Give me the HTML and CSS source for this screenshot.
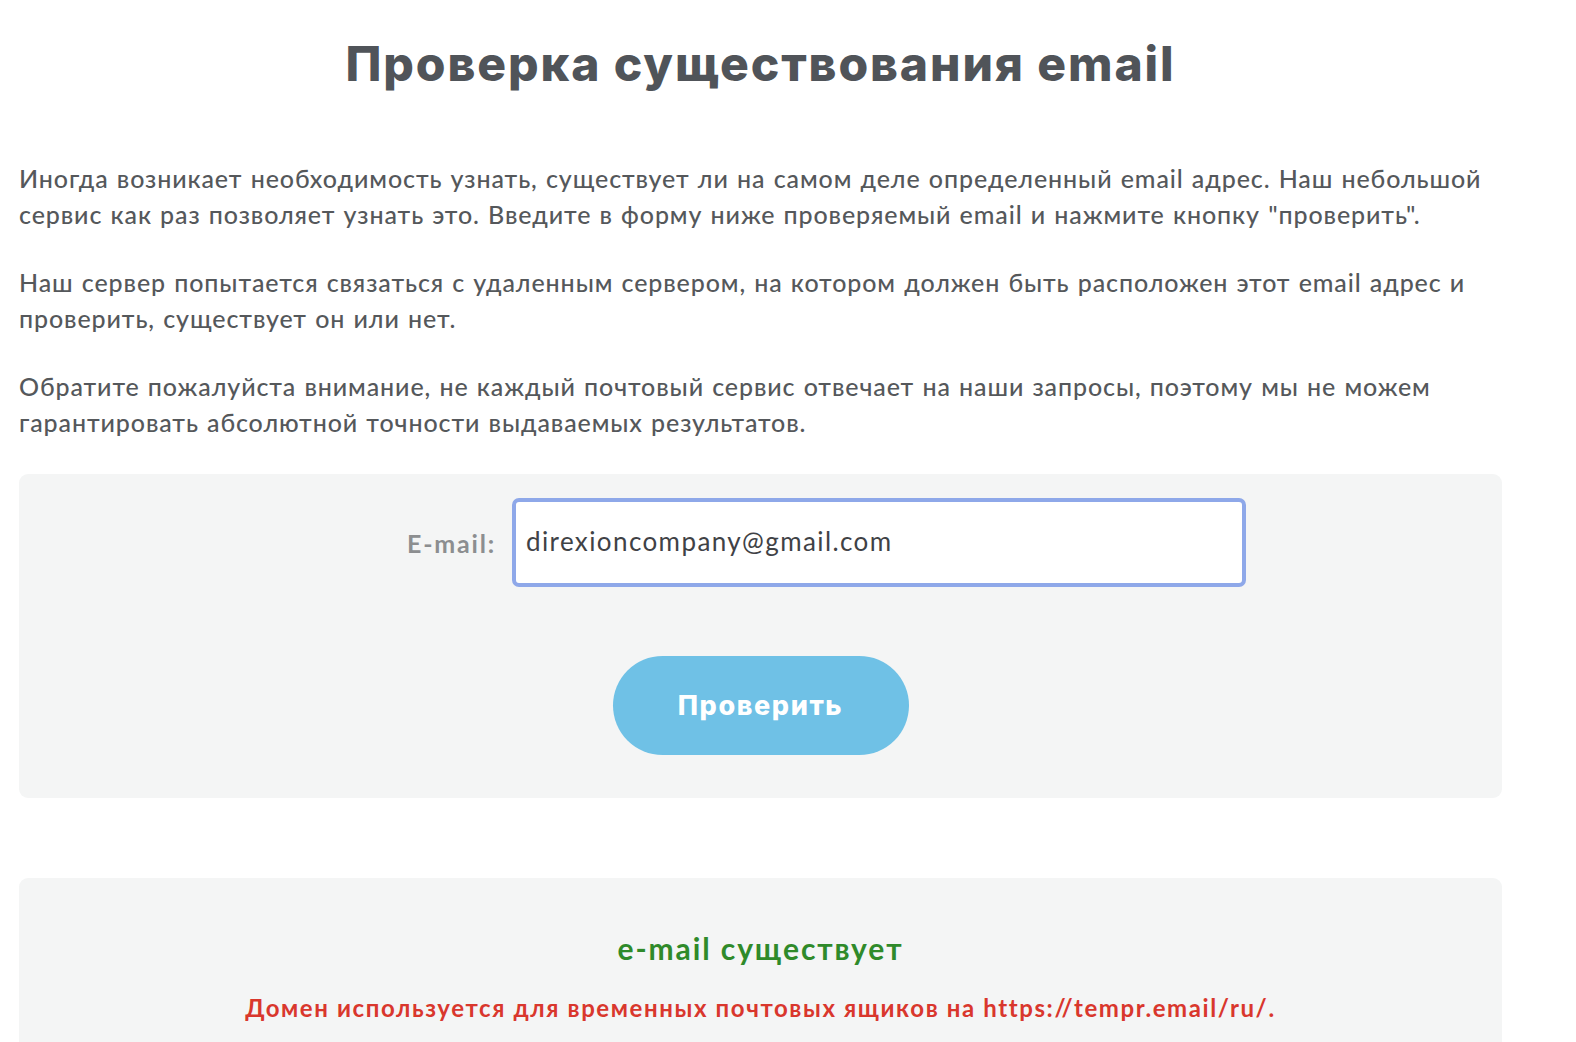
FILE: index.html
```html
<!DOCTYPE html>
<html lang="ru">
  <head>
    <meta charset="UTF-8" />
    <meta name="viewport" content="width=device-width, initial-scale=1.0" />
    <title>Проверка существования email</title>
    <link rel="stylesheet" href="styles.css">
  </head>
  <body>
    <div class="container">
      <h1>Проверка существования email</h1>

      <p>
        Иногда возникает необходимость узнать, существует ли на самом деле определенный email адрес. Наш небольшой<br />
        сервис как раз позволяет узнать это. Введите в форму ниже проверяемый email и нажмите кнопку "проверить".
      </p>
      <p>
        Наш сервер попытается связаться с удаленным сервером, на котором должен быть расположен этот email адрес и<br />
        проверить, существует он или нет.
      </p>
      <p>
        Обратите пожалуйста внимание, не каждый почтовый сервис отвечает на наши запросы, поэтому мы не можем<br />
        гарантировать абсолютной точности выдаваемых результатов.
      </p>

      <form id="checkForm" class="panel check-form">
        <div class="field">
          <label for="email">E-mail:</label>
          <input type="text" id="email" value="direxioncompany@gmail.com" />
        </div>
        <button type="submit">Проверить</button>
      </form>

      <div class="panel result">
        <div class="result-ok">e-mail существует</div>
        <div class="result-warn">Домен используется для временных почтовых ящиков на https://tempr.email/ru/.</div>
      </div>
    </div>
  </body>
</html>
```

FILE: styles.css
```css
body {
  font-family: Lato, "Open Sans", sans-serif;
  background-color: #fff;
  color: #55585b;
  margin: 0;
  padding: 0;
}

.container {
  width: 1483px;
  margin-left: 19px;
}

h1 {
  font-family: Inter, "Open Sans", sans-serif;
  font-weight: 800;
  font-size: 48px;
  letter-spacing: 1.9px;
  color: #505459;
  text-align: center;
  margin: 35px 0 67px;
  line-height: 58px;
}

p {
  font-size: 25px;
  line-height: 36px;
  font-weight: 500;
  letter-spacing: 0.9px;
  word-spacing: 1px;
  margin: 0 0 32px;
  white-space: nowrap;
}

.panel {
  background-color: #f4f5f5;
  border-radius: 9px;
}

.check-form {
  margin-top: 34px;
  padding: 24px 0 43px;
  display: flex;
  flex-direction: column;
  align-items: center;
  gap: 69px;
}

.field {
  display: flex;
  align-items: center;
  gap: 16px;
  margin-left: 132px;
}

label {
  font-weight: 700;
  font-size: 25px;
  letter-spacing: 1.8px;
  color: #8c8e90;
}

input {
  width: 734px;
  height: 89px;
  box-sizing: border-box;
  border: 4px solid #8ea8e9;
  border-radius: 7px;
  padding: 0 10px 4px;
  font-family: Lato, sans-serif;
  font-size: 26px;
  letter-spacing: 1.4px;
  color: #3f4246;
  background: #fff;
  outline: none;
}

button {
  width: 296px;
  height: 99px;
  border: none;
  border-radius: 50px;
  background-color: #6fc1e6;
  color: #fff;
  font-family: Inter, sans-serif;
  font-weight: 800;
  font-size: 27px;
  letter-spacing: 1.6px;
  cursor: pointer;
}

.result {
  margin-top: 80px;
  padding: 50px 0 60px;
  text-align: center;
}

.result-ok {
  color: #2f8a2a;
  font-size: 30px;
  font-weight: 700;
  letter-spacing: 1.9px;
  line-height: 40px;
}

.result-warn {
  margin-top: 24px;
  color: #d9372d;
  font-size: 24px;
  font-weight: 700;
  letter-spacing: 1.6px;
  line-height: 32px;
}
```
